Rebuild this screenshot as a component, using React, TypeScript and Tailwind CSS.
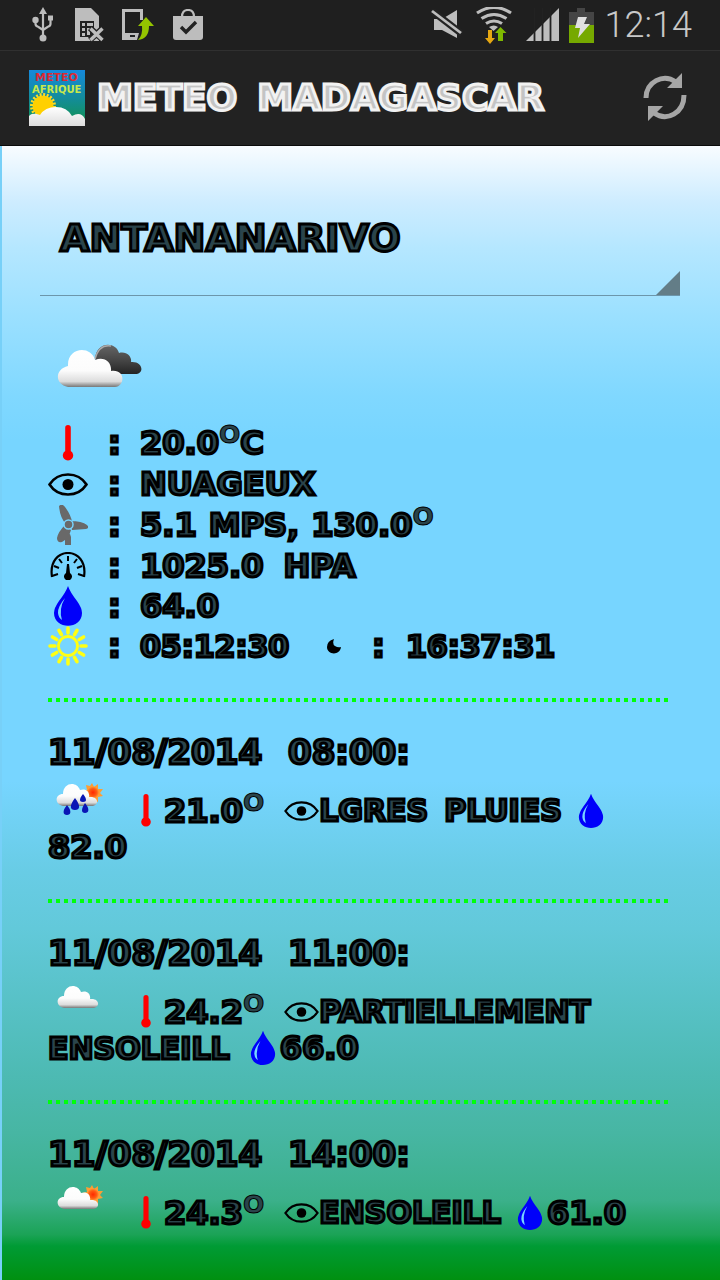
import type { ReactNode } from "react";

const inlineDark =
  "font-['DejaVu_Sans',sans-serif] font-bold uppercase text-[#2a444b] [-webkit-text-stroke:3px_#000]";
const inlineLight =
  "font-['DejaVu_Sans',sans-serif] font-bold uppercase text-[#c4c4c4] [-webkit-text-stroke:3px_#f2f2f2]";

function Degree() {
  return <span className="align-[11px] text-[25px] leading-none [-webkit-text-stroke:1px_#000]">o</span>;
}

function UsbIcon() {
  return (
    <svg width="22" height="36" viewBox="0 0 22 36" fill="#bdbdbd">
      <path d="M11 0l4 7H7z" />
      <circle cx="11" cy="31" r="3.5" />
      <circle cx="3.5" cy="13" r="3.2" />
      <rect x="16" y="8.500" width="5" height="5" />
      <path d="M11 5v26M3.500 13v4q0 2 3 3l4.500 3M18.500 13v4q0 2-3 3L11 23" fill="none" stroke="#bdbdbd" strokeWidth="2.200" />
    </svg>
  );
}

function SimIcon() {
  return (
    <svg width="30" height="34" viewBox="0 0 30 34">
      <path d="M0 0h16l8 8v25H0z" fill="#bdbdbd" />
      <path d="M5 13h14v16H5z" fill="#222" />
      <path d="M7 15h3v3H7zM12 15h6v3h-6zM7 20h3v3H7zM12 20h3v7h-3zM7 25h3v3H7z" fill="#bdbdbd" />
      <path d="M15 20l13 12M28 20L15 32" stroke="#222" strokeWidth="6" />
      <path d="M15.500 20.500l12 11.500M27.500 20.500l-12 11.500" stroke="#bdbdbd" strokeWidth="3.400" />
    </svg>
  );
}

function PhoneShareIcon() {
  return (
    <svg width="33" height="32" viewBox="0 0 33 32">
      <path d="M0 0h21v11h-3V3H3v21h14l-2 7H0z" fill="#bdbdbd" />
      <rect x="8" y="26" width="5" height="2" fill="#222" />
      <path d="M24 8l8 9h-5q0 13-11 14 5-5 4-14h-4z" fill="#94c400" />
    </svg>
  );
}

function BagIcon() {
  return (
    <svg width="32" height="32" viewBox="0 0 32 32">
      <path d="M10 8Q10 1 16 1T22 8" fill="none" stroke="#bdbdbd" strokeWidth="2.200" />
      <path d="M1 7h30v21q0 3-3 3H4q-3 0-3-3z" fill="#bdbdbd" />
      <path d="M9 18l5 5 10-10" fill="none" stroke="#222" strokeWidth="3.400" />
    </svg>
  );
}

function MuteIcon() {
  return (
    <svg width="32" height="32" viewBox="0 0 32 32">
      <path d="M3 10h8L26 1v28L11 21H3z" fill="#bdbdbd" />
      <path d="M0 1l31 24" stroke="#222" strokeWidth="7" />
      <path d="M1 2l29 22" stroke="#bdbdbd" strokeWidth="2.800" />
    </svg>
  );
}

function WifiIcon() {
  return (
    <svg width="36" height="37" viewBox="0 0 36 37">
      <g fill="none" stroke="#bdbdbd" strokeWidth="3.200">
        <path d="M1 6q17-11 34 0M5.500 11.500q12.500-8 25 0M10 16.500q8-5 16 0" />
      </g>
      <path d="M13 20q5-3 9 0l-4.500 4z" fill="#bdbdbd" />
      <path d="M12 23h4v8h3l-5 6-5-6h3z" fill="#e5a712" />
      <path d="M22 34h5v-8h3.500L24.500 20 19 26h3z" fill="#7fb900" />
    </svg>
  );
}

function SignalIcon() {
  return (
    <svg width="34" height="34" viewBox="0 0 34 34">
      <path d="M0 33L33 0v33z" fill="#bdbdbd" />
      <path d="M8.500 0v34M16.500 0v34M24.500 0v34" stroke="#222" strokeWidth="1.800" />
    </svg>
  );
}

function BatteryIcon() {
  return (
    <svg width="25" height="35" viewBox="0 0 25 35">
      <path d="M8 0h8v4h9v13H0V4h8z" fill="#454545" />
      <path d="M0 17h25v18H0z" fill="#76a900" />
      <path d="M9 9h9l-3 7h6L9 30l2-10H6z" fill="#e0e0e0" />
    </svg>
  );
}

function AppLogo() {
  return (
    <svg width="56" height="56" viewBox="0 0 56 56" role="img" aria-label="Meteo Afrique">
      <defs>
        <linearGradient id="logoSky" x2="0" y2="1">
          <stop stopColor="#1689dc" />
          <stop offset=".5" stopColor="#138c9b" />
          <stop offset="1" stopColor="#129448" />
        </linearGradient>
        <linearGradient id="logoCloud" x2="0" y2="1">
          <stop stopColor="#fff" />
          <stop offset="1" stopColor="#ddd" />
        </linearGradient>
      </defs>
      <path d="M0 0h56v56H0z" fill="url(#logoSky)" />
      <circle cx="14" cy="36" r="10.500" fill="#ffd000" />
      <circle cx="14" cy="36" r="11.500" fill="none" stroke="#ffdb24" strokeWidth="3" strokeDasharray="2 1.600" />
      <path d="M0 56V46q3-4 11-1 5-8 16-8 11 0 16 9 9-5 13 3v7z" fill="url(#logoCloud)" />
      <text x="6" y="11" fontSize="11" fontWeight="700" fontFamily="DejaVu Sans" fill="#dc2a34">METEO</text>
      <text x="3" y="23" fontSize="10" fontWeight="700" fontFamily="DejaVu Sans" fill="#c8e84c">AFRIQUE</text>
    </svg>
  );
}

function RefreshIcon() {
  return (
    <svg width="46" height="50" viewBox="0 0 46 50">
      <g fill="none" stroke="#a6a6a6" strokeWidth="5">
        <path d="M4 25C4 9 21 0 34 9" />
        <path d="M42 22C42 40 25 49 12 40" />
      </g>
      <path d="M40 0v15H25zM6 48V33h15z" fill="#a6a6a6" />
    </svg>
  );
}

function CloudDefs() {
  return (
    <svg width="0" height="0" className="absolute" aria-hidden="true">
      <defs>
        <linearGradient id="cloud" x2="0" y2="1">
          <stop stopColor="#fff" />
          <stop offset=".55" stopColor="#fcfcfc" />
          <stop offset=".85" stopColor="#dcdcdc" />
          <stop offset="1" stopColor="#777" />
        </linearGradient>
        <linearGradient id="darkCloud" x2="0" y2="1">
          <stop stopColor="#666" />
          <stop offset=".5" stopColor="#484848" />
          <stop offset="1" stopColor="#242424" />
        </linearGradient>
        <radialGradient id="sun">
          <stop stopColor="#ff2900" />
          <stop offset=".6" stopColor="#ff5b13" />
          <stop offset="1" stopColor="#ffa43c" />
        </radialGradient>
      </defs>
    </svg>
  );
}

function CloudyIcon() {
  return (
    <svg width="86" height="46" viewBox="0 0 86 46">
      <path d="M38 16C39-2 59-2 62 10c8-2 13 4 12 9 12-1 14 12 4 12H50z" fill="url(#darkCloud)" />
      <path d="M38 16Q42 1 54 3" fill="none" stroke="#aaa" strokeWidth="1.500" />
      <path d="M11 44C-3 41-2 26 11 23 10 4 34 2 38 17c9-4 17 2 16 11 15-2 14 15 4 16z" fill="url(#cloud)" />
    </svg>
  );
}

function SmallSun() {
  return (
    <g>
      <path d="M36 1l2 4 4-3v5l5 0-3 4 3 3-5 1v5l-4-2-4 3-1-5-5 0 2-4-4-3 5-1-1-5 4 1z" fill="#ff9d32" />
      <circle cx="37" cy="10.500" r="6.300" fill="url(#sun)" />
    </g>
  );
}

const smallCloud = "M7 24C-2 22-1 12 7 12 7 0 21-1 24 8c6-2 10 2 9 7 10-1 10 8 4 9z";

function WeatherIcon({ kind }: { kind: "rain" | "cloud" | "sun" }) {
  if (kind === "rain") {
    return (
      <svg width="48" height="34" viewBox="0 0 48 34">
        <SmallSun />
        <path d={smallCloud} fill="url(#cloud)" />
        <g fill="#0a16b5">
          <path d="M19 16c6 8 5 12 0 12s-6-4 0-12zM11 23c5 6 4 10 0 10s-5-4 0-10zM27 12c4 5 4 8 0 8s-4-3 0-8zM29 21c5 6 4 10 0 10s-4-4 0-10z" />
        </g>
      </svg>
    );
  }
  return (
    <svg width="48" height="28" viewBox="0 0 48 28">
      {kind === "sun" && <SmallSun />}
      <path d={smallCloud} transform="translate(1 1)" fill="url(#cloud)" />
    </svg>
  );
}

function Thermometer({ small = false }: { small?: boolean }) {
  return (
    <svg width="12" height={small ? 33 : 36} viewBox="0 0 12 36" className="shrink-0" fill="red">
      <path d="M3.200 2.800a2.800 2.800 0 0 1 5.600 0V26a5.200 5.200 0 1 1-5.600 0z" />
    </svg>
  );
}

function Eye({ small = false }: { small?: boolean }) {
  return (
    <svg width={small ? 35 : 40} height={small ? 20 : 23} viewBox="0 0 40 23" className="shrink-0">
      <path d="M1.500 11.500Q8 1.500 20 1.500t18.500 10Q32 21.500 20 21.500t-18.500-10z" fill="none" stroke="#000" strokeWidth="2.600" />
      <circle cx="20" cy="11.500" r="5.500" />
    </svg>
  );
}

function Fan() {
  return (
    <svg width="40" height="40" viewBox="0 0 40 40" fill="#696969">
      <path d="M11 1q3-3 6 1 6 8 7 15l-6 2q-6-6-7-18zM22 16q12 0 17 4 3 3-1 4l-14 1zM17 20l6 5q-2 8-9 12-5 1-5-4 1-6 8-13zM17 32l5-3 1 3v8h-6z" />
      <circle cx="20.500" cy="19.500" r="4.500" fill="#696969" stroke="#77d5ff" strokeWidth="1.500" />
    </svg>
  );
}

function Gauge() {
  return (
    <svg width="36" height="28" viewBox="0 0 36 28">
      <path d="M2 25C-3-7 39-7 34 25" fill="none" stroke="#000" strokeWidth="2.200" />
      <path d="M18 4v5M9 7l3 4M27 7l-3 4M4 14l5 2M32 14l-5 2M2 24l6-2M34 24l-6-2" stroke="#000" strokeWidth="2" />
      <path d="M17 12h2l1 9a4 4 0 1 1-4 0z" />
    </svg>
  );
}

function Drop({ small = false }: { small?: boolean }) {
  return (
    <svg width={small ? 26 : 30} height={small ? 36 : 40} viewBox="0 0 30 40" className="shrink-0">
      <path d="M15 0q2 6 9 15 5 7 5 12c0 17-28 17-28 0q0-5 5-12 7-9 9-15z" fill="#0000fa" />
      <path d="M12 12Q4.500 21 5 27q.5 5 4 7-3.500-11 3-22z" fill="#77d5ff" />
    </svg>
  );
}

function SunIcon() {
  return (
    <svg width="40" height="40" viewBox="0 0 40 40" stroke="#ffff12" fill="none" strokeLinecap="round">
      <circle cx="20" cy="20" r="9.500" strokeWidth="2.800" />
      <path strokeWidth="3.600" d="M20 2v5M20 33v5M2 20h5M33 20h5M11 4.400l2.500 4.300M26.500 31.300l2.500 4.300M4.400 11l4.300 2.500M31.300 26.500l4.300 2.500M4.400 29l4.300-2.500M31.300 13.500l4.300-2.500M11 35.600l2.500-4.300M26.500 8.700L29 4.400" />
    </svg>
  );
}

function Moon() {
  return (
    <svg width="16" height="16" viewBox="0 0 16 16">
      <path d="M8 1Q6 6 9 8t6 1c-1 9-14 8-14 0q0-6 7-8z" />
    </svg>
  );
}

function Reading({ icon, children, tall = false }: { icon: ReactNode; children: ReactNode; tall?: boolean }) {
  return (
    <li className={tall ? "flex h-[42px] items-center" : "flex h-10 items-center"}>
      <span className="flex w-10 shrink-0 justify-center">{icon}</span>
      <span className="w-[52px] shrink-0 pl-[20px]">:</span>
      {children}
    </li>
  );
}

function Forecast(props: {
  date: string;
  time: string;
  kind: "rain" | "cloud" | "sun";
  temperature: string;
  words: string[];
  rest?: string;
  humidity: string;
  dropFirst?: boolean;
}) {
  const { date, time, kind, temperature, words, rest, humidity, dropFirst } = props;
  return (
    <article className="mb-[34px]">
      <div className="mr-1 h-1 bg-[repeating-linear-gradient(90deg,#00ff0c_0_4px,transparent_4px_8px)]" />
      <h2 className="mt-[30px] flex h-10 items-center gap-5 text-[34px]">
        <span className="min-w-[220px]">{date}</span>
        <span>{time}</span>
      </h2>
      <div className="mt-[20px] flex h-[37px] items-center text-[30px] whitespace-nowrap">
        <span className="flex w-[92px] shrink-0 self-start pl-[8px]">
          <span className="-mt-[10px]">
            <WeatherIcon kind={kind} />
          </span>
        </span>
        <Thermometer small />
        <span className="mr-[20px] ml-[12px] text-[32px]">
          {temperature}
          <Degree />
        </span>
        <Eye small />
        <span className="flex gap-4">
          {words.map((word) => (
            <span key={word}>{word}</span>
          ))}
        </span>
        {(dropFirst || !rest) && (
          <span className="ml-4 flex items-center gap-1">
            <Drop small />
            {!dropFirst && <span className="text-[32px]">{humidity}</span>}
          </span>
        )}
      </div>
      {(rest || dropFirst) && (
        <div className="flex h-9 items-center gap-1 text-[30px]">
          {rest && (
            <span className="flex items-center gap-5">
              {rest}
              <Drop small />
            </span>
          )}
          <span className="text-[32px]">{humidity}</span>
        </div>
      )}
    </article>
  );
}

export default function App() {
  return (
    <div className="flex h-screen flex-col overflow-hidden bg-[#222]">
      <CloudDefs />
      <div className="flex h-[51px] shrink-0 items-center justify-between border-b border-[#303030] bg-[#1f1f1f] pr-7 pl-8">
        <div className="flex items-center gap-[17px]">
          <UsbIcon />
          <span className="ml-1 flex">
            <SimIcon />
          </span>
          <PhoneShareIcon />
          <BagIcon />
        </div>
        <div className="flex items-center">
          <MuteIcon />
          <span className="mr-[14px] ml-[13px]">
            <WifiIcon />
          </span>
          <SignalIcon />
          <span className="mr-[11px] ml-[9px]">
            <BatteryIcon />
          </span>
          <time className="font-['Roboto',sans-serif] text-[36px] leading-none font-light text-[#c8c8c8]">12:14</time>
        </div>
      </div>
      <header className="flex h-[95px] shrink-0 items-center border-b border-[#0b0b0b] pr-8 pl-[29px]">
        <AppLogo />
        <h1 className={`${inlineLight} ml-3 flex flex-1 gap-5 text-[36px] leading-10`}>
          <span>Meteo</span>
          <span>Madagascar</span>
        </h1>
        <button type="button" aria-label="Actualiser" className="shrink-0">
          <RefreshIcon />
        </button>
      </header>
      <main
        className={`${inlineDark} min-h-0 flex-1 overflow-hidden border-l-2 border-[#77d0f8] bg-[linear-gradient(180deg,#f8fcff_0%,#cdecff_5%,#b5e7ff_9%,#9be0ff_15%,#80d8ff_22%,#77d5ff_26%,#77d5ff_56%,#68cce5_64%,#62c9da_69%,#4dbab3_82%,#47b6a3_87%,#3bb08a_93%,#1ba356_96%,#009b35_97%,#009010_100%)] pr-10 pl-[38px]`}
      >
        <div className="relative mt-9 border-b border-[#6c96ab]">
          <select
            aria-label="Ville"
            className="block h-[113px] w-full appearance-none bg-transparent pl-4 indent-[4px] text-[38px] uppercase outline-none"
          >
            <option>Antananarivo</option>
          </select>
          <svg width="24" height="24" viewBox="0 0 24 24" className="pointer-events-none absolute right-0 bottom-0">
            <path d="M24 0v24H0z" fill="#637d87" />
          </svg>
        </div>
        <div className="pr-2 pl-2">
          <div className="mt-[47px] mb-[33px] flex h-[46px] pl-[9px]">
            <CloudyIcon />
          </div>
          <ul className="mb-8 text-[32px] whitespace-nowrap">
            <Reading tall icon={<Thermometer />}>
              <span>
                20.0
                <Degree />C
              </span>
            </Reading>
            <Reading icon={<Eye />}>Nuageux</Reading>
            <Reading tall icon={<Fan />}>
              <span className="flex items-center gap-3">
                <span>5.1</span>
                <span>mps,</span>
                <span>
                  130.0
                  <Degree />
                </span>
              </span>
            </Reading>
            <Reading icon={<Gauge />}>
              <span className="flex gap-5">
                <span>1025.0</span>
                <span>hPa</span>
              </span>
            </Reading>
            <Reading icon={<Drop />}>64.0</Reading>
            <Reading icon={<SunIcon />}>
              <span className="min-w-[186px] text-[30px]">05:12:30</span>
              <Moon />
              <span className="ml-[30px] w-[34px]">:</span>
              <span className="text-[30px]">16:37:31</span>
            </Reading>
          </ul>
          <Forecast
            date="11/08/2014"
            time="08:00:"
            kind="rain"
            temperature="21.0"
            words={["lgres", "pluies"]}
            dropFirst
            humidity="82.0"
          />
          <Forecast
            date="11/08/2014"
            time="11:00:"
            kind="cloud"
            temperature="24.2"
            words={["partiellement"]}
            rest="ensoleill"
            humidity="66.0"
          />
          <Forecast
            date="11/08/2014"
            time="14:00:"
            kind="sun"
            temperature="24.3"
            words={["ensoleill"]}
            humidity="61.0"
          />
        </div>
      </main>
    </div>
  );
}
